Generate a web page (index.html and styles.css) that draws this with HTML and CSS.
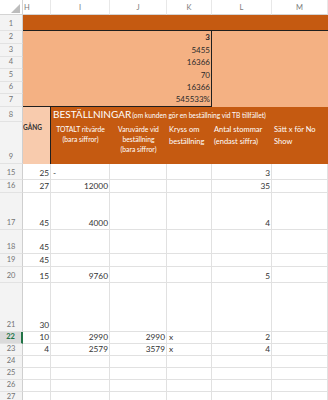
FILE: index.html
```html
<!DOCTYPE html>
<html>
<head>
<meta charset="utf-8">
<link rel="stylesheet" href="styles.css">
</head>
<body>
<div class="sheet">
  <div class="corner"><span class="tri"></span></div>
  <div class="ch ch-h">H</div>
  <div class="ch">I</div>
  <div class="ch">J</div>
  <div class="ch">K</div>
  <div class="ch">L</div>
  <div class="ch ch-last">M</div>

  <div class="rh">1</div>
  <div class="banner"></div>

  <div class="rh">2</div>
  <div class="fill span3"></div>
  <div class="fill kv bold">3</div>
  <div class="fill span2"></div>

  <div class="rh">3</div>
  <div class="fill span3"></div>
  <div class="fill kv">5455</div>
  <div class="fill span2"></div>

  <div class="rh">4</div>
  <div class="fill span3"></div>
  <div class="fill kv">16366</div>
  <div class="fill span2"></div>

  <div class="rh">5</div>
  <div class="fill span3"></div>
  <div class="fill kv">70</div>
  <div class="fill span2"></div>

  <div class="rh">6</div>
  <div class="fill span3"></div>
  <div class="fill kv">16366</div>
  <div class="fill span2"></div>

  <div class="rh">7</div>
  <div class="fill span3 edge"></div>
  <div class="fill kv edge">545533%</div>
  <div class="fill span2"></div>

  <div class="rh">8</div>
  <div class="peach"><span>GÅNG</span></div>
  <div class="title"><span class="big">BESTÄLLNINGAR</span><span class="small">(om kunden gör en beställning vid TB tillfället)</span></div>

  <div class="rh">9</div>
  <div class="sub sub-c">TOTALT ritvärde<br>(bara siffror)</div>
  <div class="sub sub-c">Varuvärde vid<br>beställning<br>(bara siffror)</div>
  <div class="sub sub-l">Kryss om<br>beställning</div>
  <div class="sub sub-l">Antal stommar<br>(endast siffra)</div>
  <div class="sub sub-l">Sätt x för No<br>Show</div>

  <div class="rh">15</div>
  <div class="c r">25</div><div class="c">-</div><div class="c"></div><div class="c"></div><div class="c r">3</div><div class="c"></div>

  <div class="rh">16</div>
  <div class="c r">27</div><div class="c r">12000</div><div class="c"></div><div class="c"></div><div class="c r">35</div><div class="c"></div>

  <div class="rh">17</div>
  <div class="c r">45</div><div class="c r">4000</div><div class="c"></div><div class="c"></div><div class="c r">4</div><div class="c"></div>

  <div class="rh">18</div>
  <div class="c r">45</div><div class="c"></div><div class="c"></div><div class="c"></div><div class="c"></div><div class="c"></div>

  <div class="rh">19</div>
  <div class="c r">45</div><div class="c"></div><div class="c"></div><div class="c"></div><div class="c"></div><div class="c"></div>

  <div class="rh">20</div>
  <div class="c r">15</div><div class="c r">9760</div><div class="c"></div><div class="c"></div><div class="c r">5</div><div class="c"></div>

  <div class="rh">21</div>
  <div class="c r">30</div><div class="c"></div><div class="c"></div><div class="c"></div><div class="c"></div><div class="c"></div>

  <div class="rh active">22</div>
  <div class="c r">10</div><div class="c r">2990</div><div class="c r">2990</div><div class="c">x</div><div class="c r">2</div><div class="c"></div>

  <div class="rh">23</div>
  <div class="c r">4</div><div class="c r">2579</div><div class="c r">3579</div><div class="c">x</div><div class="c r">4</div><div class="c"></div>

  <div class="rh">24</div>
  <div class="c"></div><div class="c"></div><div class="c"></div><div class="c"></div><div class="c"></div><div class="c"></div>

  <div class="rh">25</div>
  <div class="c"></div><div class="c"></div><div class="c"></div><div class="c"></div><div class="c"></div><div class="c"></div>

  <div class="rh">26</div>
  <div class="c"></div><div class="c"></div><div class="c"></div><div class="c"></div><div class="c"></div><div class="c"></div>

  <div class="rh">27</div>
  <div class="c"></div><div class="c"></div><div class="c"></div><div class="c"></div><div class="c"></div><div class="c"></div>
</div>
</body>
</html>
```

FILE: styles.css
```css
* { box-sizing: border-box; margin: 0; padding: 0; }
html, body { width: 328px; height: 400px; overflow: hidden; background: #ffffff; }
body { font-family: Lato, "Noto Sans", sans-serif; color: #333333; }

.sheet {
  display: grid;
  grid-template-columns: 23px 28px 59px 57px 45px 60px 56px;
  grid-template-rows: 15px 16px 13px 13px 12px 13px 12px 13px 15px 42px 16px 13px 37px 24px 13px 16px 49px 12px 12px 12px 12px 12px 12px;
}

.corner {
  background: #ffffff;
  border-right: 1px solid #d4d4d4;
  border-bottom: 1px solid #d4d4d4;
  display: flex;
  justify-content: flex-end;
  align-items: flex-end;
  padding: 0 2px 1px 0;
}
.tri {
  width: 9px;
  height: 9px;
  background: #bdbdbd;
  clip-path: polygon(100% 0, 100% 100%, 0 100%);
}

.ch {
  background: #ffffff;
  border-right: 1px solid #e8e8e8;
  border-bottom: 1px solid #d4d4d4;
  font-size: 7.5px;
  color: #7a7a7a;
  display: flex;
  align-items: center;
  justify-content: center;
}
.ch-h { justify-content: flex-start; padding-left: 1px; }

.rh {
  background: #f3f3f3;
  border-right: 1px solid #cfcfcf;
  border-bottom: 1px solid #e2e2e2;
  font-size: 7.5px;
  color: #737373;
  display: flex;
  justify-content: center;
  align-items: flex-end;
  line-height: 10px;
  padding-bottom: 1px;
}
.rh.active {
  background: #dadada;
  color: #217346;
  font-weight: 700;
  border-right: 2px solid #217346;
}

.banner {
  grid-column: span 6;
  background: #c55a11;
  border-bottom: 1px solid #1f1f1f;
}

.fill { background: #f4b183; }
.span3 { grid-column: span 3; }
.span2 { grid-column: span 2; }
.kv {
  border-right: 1px solid #1f1f1f;
  display: flex;
  justify-content: flex-end;
  align-items: flex-end;
  font-size: 8px;
  line-height: 10px;
  padding: 0 1px 2px 0;
  color: #2b2b2b;
}
.bold { font-weight: 700; }
.edge { border-bottom: 1px solid #1f1f1f; }

.peach {
  grid-row: span 2;
  background: #f8cbad;
  border-right: 1px solid #1f1f1f;
  padding-top: 16px;
  font-size: 6.5px;
  line-height: 10px;
  font-weight: 700;
  color: #333333;
  overflow: hidden;
  white-space: nowrap;
}

.title {
  grid-column: span 5;
  background: #c55a11;
  color: #ffffff;
  display: flex;
  align-items: baseline;
  padding: 1px 0 0 2px;
  white-space: nowrap;
  overflow: hidden;
}
.big { font-size: 10px; line-height: 12px; }
.small { font-size: 6.7px; margin-left: 1px; }

.sub {
  background: #c55a11;
  color: #ffffff;
  white-space: nowrap;
}
.sub-c {
  text-align: center;
  font-size: 6.8px;
  line-height: 10px;
  padding-top: 1.5px;
}
.sub-l {
  font-size: 7.5px;
  line-height: 12px;
  padding: 2px 0 0 2px;
}

.c {
  border-right: 1px solid #e1e1e1;
  border-bottom: 1px solid #e1e1e1;
  font-size: 8.3px;
  line-height: 10px;
  display: flex;
  align-items: flex-end;
  padding: 0 1px 1px 2px;
  white-space: nowrap;
  color: #333333;
}
.r { justify-content: flex-end; }
```
